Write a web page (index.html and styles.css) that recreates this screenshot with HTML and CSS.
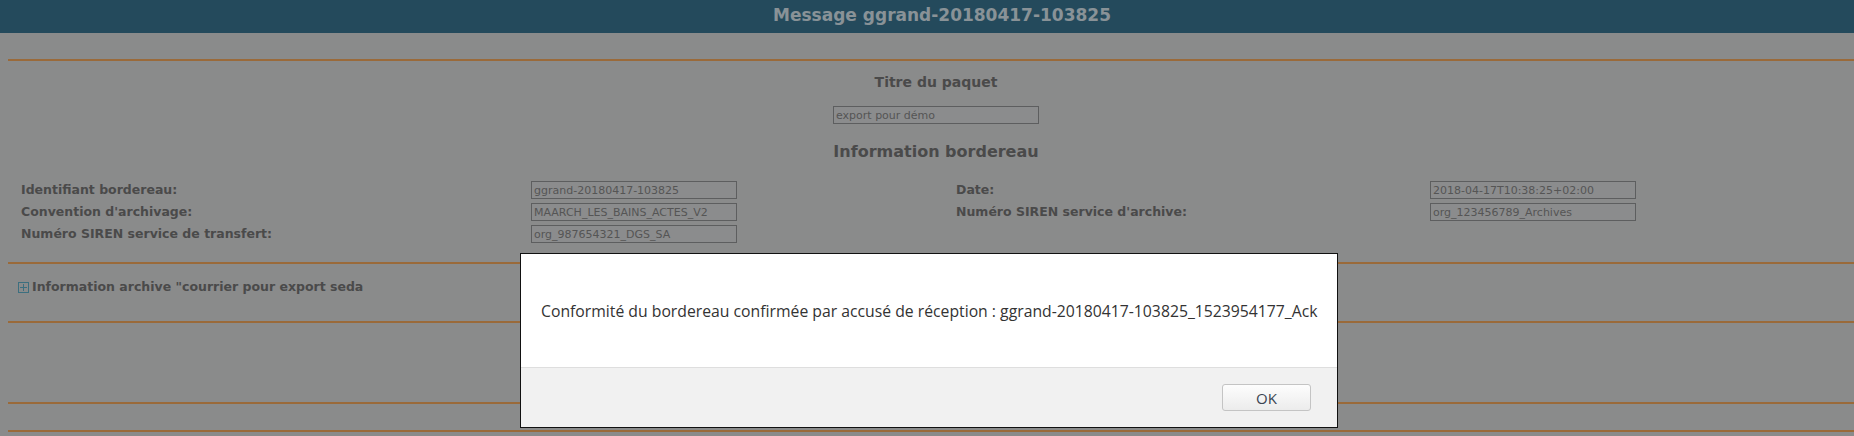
FILE: index.html
```html
<!DOCTYPE html>
<html lang="fr">
<head>
    <meta charset="UTF-8">
    <title>Message ggrand-20180417-103825</title>
    <link rel="stylesheet" href="styles.css">
</head>
<body>
    <div class="header">Message ggrand-20180417-103825</div>

    <div class="main">
        <div class="sep first"></div>
        <div class="center">
            <h3>Titre du paquet</h3>
            <input class="field" type="text" value="export pour démo">
            <h2>Information bordereau</h2>
        </div>
        <div class="info-grid">
            <label>Identifiant bordereau:</label>
            <input class="field" type="text" value="ggrand-20180417-103825">
            <label>Date:</label>
            <input class="field" type="text" value="2018-04-17T10:38:25+02:00">

            <label>Convention d'archivage:</label>
            <input class="field" type="text" value="MAARCH_LES_BAINS_ACTES_V2">
            <label>Numéro SIREN service d'archive:</label>
            <input class="field" type="text" value="org_123456789_Archives">

            <label>Numéro SIREN service de transfert:</label>
            <input class="field" type="text" value="org_987654321_DGS_SA">
        </div>

        <div class="sep"></div>
        <div class="archive">
            <span class="plus"></span>Information archive "courrier pour export seda
        </div>
        <div class="sep"></div>
        <div class="empty"></div>
        <div class="sep"></div>
        <div class="empty small"></div>
        <div class="sep"></div>
    </div>

    <div class="overlay"></div>

    <div class="dialog">
        <div class="dialog-content">
            Conformité du bordereau confirmée par accusé de réception : ggrand-20180417-103825_1523954177_Ack
        </div>
        <div class="dialog-buttons">
            <button>OK</button>
        </div>
    </div>
</body>
</html>
```

FILE: styles.css
```css
body {
    font-family: 'DejaVu Sans', Verdana, sans-serif;
    background-color: #c6c7c8;
    color: #6b6b6b;
    margin: 0;
    overflow: hidden;
}
.header {
    height: 33px;
    line-height: 31px;
    padding-left: 30px;
    background-color: #346b85;
    color: #c4d2d9;
    font-size: 17px;
    font-weight: bold;
    text-align: center;
}
.main {
    padding-left: 8px;
}
.sep {
    border-top: 2px solid #dd9853;
}
.sep.first {
    margin-top: 26px;
}
.center {
    text-align: center;
    padding-left: 10px;
}
.center h3 {
    font-size: 14px;
    line-height: 17px;
    margin: 13px 0 15px;
}
.center h2 {
    font-size: 16px;
    line-height: 19px;
    margin: 18px 0 0;
}
.field {
    display: block;
    box-sizing: border-box;
    width: 206px;
    height: 18px;
    margin: 0;
    padding: 0 2px;
    border: 1px solid #868788;
    background-color: #c8c9ca;
    color: #7a7a7a;
    font-family: 'DejaVu Sans', sans-serif;
    font-size: 11px;
}
.center .field {
    margin: 0 auto;
}
.info-grid {
    display: grid;
    grid-template-columns: 510px 425px 474px 206px;
    row-gap: 4px;
    margin: 20px 0 19px 13px;
    font-size: 12.5px;
    font-weight: bold;
}
.info-grid label {
    line-height: 18px;
}
.archive {
    font-size: 12.5px;
    font-weight: bold;
    line-height: 16px;
    margin: 15px 0 26px 10px;
    display: flex;
    align-items: center;
}
.plus {
    width: 9px;
    height: 9px;
    border: 1px solid #579fb7;
    margin-right: 3px;
    background:
        linear-gradient(#579fb7, #579fb7) center / 7px 1px no-repeat,
        linear-gradient(#579fb7, #579fb7) center / 1px 7px no-repeat;
}
.empty {
    height: 79px;
}
.empty.small {
    height: 26px;
}
.overlay {
    position: fixed;
    inset: 0;
    background-color: rgba(0, 0, 0, 0.3);
}
.dialog {
    position: fixed;
    left: 520px;
    top: 253px;
    width: 818px;
    height: 175px;
    box-sizing: border-box;
    border: 1px solid #111;
    background-color: #fff;
    font-family: 'Open Sans', sans-serif;
    color: #333;
    display: flex;
    flex-direction: column;
}
.dialog-content {
    height: 113px;
    display: flex;
    align-items: center;
    padding-left: 20px;
    font-size: 15.75px;
}
.dialog-buttons {
    flex: 1;
    background-color: #f1f1f1;
    border-top: 1px solid #dedede;
    display: flex;
    justify-content: flex-end;
    align-items: center;
    padding-right: 26px;
}
.dialog-buttons button {
    width: 89px;
    height: 27px;
    border: 1px solid #c4c4c4;
    border-radius: 3px;
    background: linear-gradient(#fdfdfd, #ececec);
    color: #3b4552;
    font-family: 'Open Sans', sans-serif;
    font-size: 15px;
    cursor: pointer;
}
```
